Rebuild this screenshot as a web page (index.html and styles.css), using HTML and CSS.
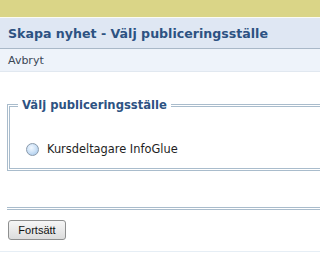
FILE: index.html
```html
<!DOCTYPE html>
<html lang="sv">
<head>
<meta charset="utf-8">
<title>Skapa nyhet</title>
<link rel="stylesheet" href="styles.css">
</head>
<body>
<div class="page">
  <div class="topbar"></div>
  <div class="header"><h1 class="title">Skapa nyhet - Välj publiceringsställe</h1></div>
  <div class="subbar"><a class="cancel" href="#">Avbryt</a></div>
  <form class="content">
    <fieldset class="box">
      <legend class="legend">Välj publiceringsställe</legend>
      <label class="option"><span class="radio"></span><span class="option-text">Kursdeltagare InfoGlue</span></label>
    </fieldset>
    <div class="separator"></div>
    <div class="actions"><button type="button" class="btn">Fortsätt</button></div>
  </form>
  <div class="footer-line"></div>
</div>
</body>
</html>
```
FILE: styles.css
```css
html, body {
  margin: 0;
  padding: 0;
  background: #ffffff;
  overflow: hidden;
}
.page {
  font-family: "DejaVu Sans", Verdana, sans-serif;
}
.topbar {
  height: 17px;
  background: #dad587;
  border-bottom: 1px solid #fbfbf2;
}
.header {
  height: 30px;
  background: #dfe7f3;
  border-bottom: 1px solid #a9b8c8;
  display: flex;
  align-items: center;
  padding-left: 8px;
}
.title {
  margin: 0;
  font-size: 12.6px;
  font-weight: bold;
  color: #2d5282;
}
.subbar {
  height: 22px;
  background: #eef3fa;
  border-bottom: 1px solid #e1e8f0;
  display: flex;
  align-items: center;
  padding-left: 8px;
}
.cancel {
  font-size: 11px;
  color: #3b4756;
  text-decoration: none;
}
.content {
  margin: 0;
  padding: 26px 0 0 7px;
}
.box {
  margin: 0;
  border: 3px double #a9bccc;
  border-right: none;
  padding: 30px 0 12px 8px;
  min-width: 0;
}
.legend {
  padding: 0 4px;
  margin: 0;
  font-size: 11.6px;
  font-weight: bold;
  color: #2d5282;
}
.option {
  display: flex;
  align-items: center;
  gap: 8px;
  margin-left: 8px;
}
.radio {
  width: 11px;
  height: 11px;
  border-radius: 50%;
  border: 1px solid #8a9aab;
  background: radial-gradient(circle at 40% 35%, #f2f8ff 0%, #cfe3f7 45%, #9fc3e8 100%);
}
.option-text {
  font-size: 11.4px;
  color: #1e1e1e;
}
.separator {
  margin-top: 36px;
  height: 0;
  border-top: 3px double #a9bccc;
}
.actions {
  padding: 9px 0 0 1px;
}
.btn {
  width: 58px;
  height: 20px;
  padding: 0;
  font-family: "Liberation Sans", Arial, sans-serif;
  font-size: 11px;
  color: #111;
  background: linear-gradient(#f6f6f6, #dcdcdc);
  border: 1px solid #8e8f8f;
  border-radius: 3px;
}
.footer-line {
  margin-top: 11px;
  border-top: 1px solid #e6eef5;
}
```
